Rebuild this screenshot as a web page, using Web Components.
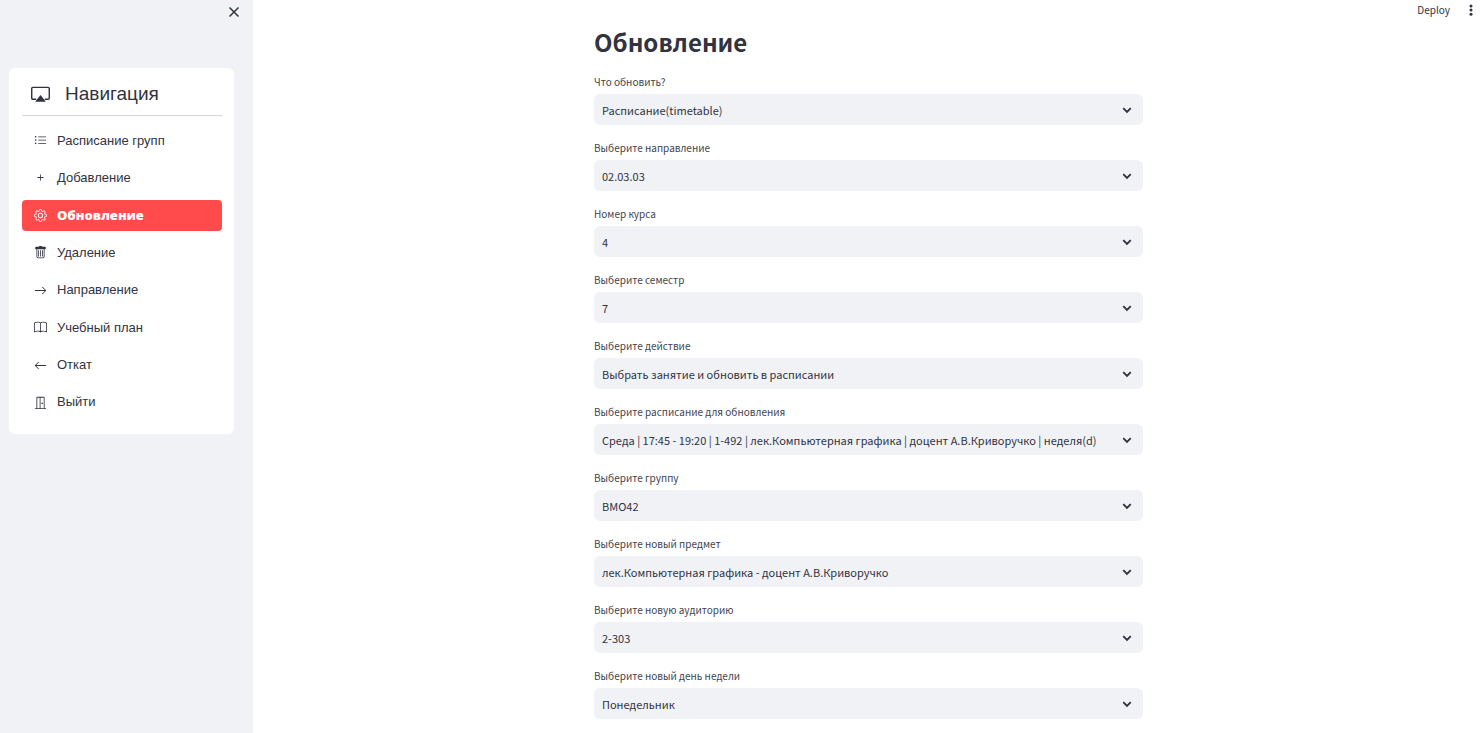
<!DOCTYPE html>
<html lang="ru">
<head>
<meta charset="utf-8">
<title>Обновление</title>
<style>
  html, body { margin: 0; height: 100%; }
  body { font-family: "Noto Sans CJK SC", "Noto Sans", sans-serif; color: #31333f; background: #fff; }
</style>
</head>
<body>
<timetable-app></timetable-app>
<script>
const ICONS = {
  airplay: '<path fill="none" stroke="currentColor" stroke-width="1.2" stroke-linecap="round" d="M4 12H1.600A1 1 0 0 1 .6 11V3A1 1 0 0 1 1.600 2h12.800a1 1 0 0 1 1 1v8a1 1 0 0 1-1 1H12"/><path d="M8 8.500 12.500 14h-9z"/>',
  list: '<path fill-rule="evenodd" d="M5 11.500a.5.5 0 0 1 .5-.5h9a.5.5 0 0 1 0 1h-9a.5.5 0 0 1-.5-.5zm0-4a.5.5 0 0 1 .5-.5h9a.5.5 0 0 1 0 1h-9a.5.5 0 0 1-.5-.5zm0-4a.5.5 0 0 1 .5-.5h9a.5.5 0 0 1 0 1h-9a.5.5 0 0 1-.5-.5zm-3 1a1 1 0 1 0 0-2 1 1 0 0 0 0 2zm0 4a1 1 0 1 0 0-2 1 1 0 0 0 0 2zm0 4a1 1 0 1 0 0-2 1 1 0 0 0 0 2z"/>',
  plus: '<path d="M8 4a.5.5 0 0 1 .5.5v3h3a.5.5 0 0 1 0 1h-3v3a.5.5 0 0 1-1 0v-3h-3a.5.5 0 0 1 0-1h3v-3A.5.5 0 0 1 8 4z"/>',
  gear: '<path d="M8 4.754a3.246 3.246 0 1 0 0 6.492 3.246 3.246 0 0 0 0-6.492zM5.754 8a2.246 2.246 0 1 1 4.492 0 2.246 2.246 0 0 1-4.492 0z"/><path d="M9.796 1.343c-.527-1.790-3.065-1.790-3.592 0l-.094.319a.873.873 0 0 1-1.255.52l-.292-.16c-1.640-.892-3.433.902-2.540 2.541l.159.292a.873.873 0 0 1-.52 1.255l-.319.094c-1.790.527-1.790 3.065 0 3.592l.319.094a.873.873 0 0 1 .52 1.255l-.16.292c-.892 1.640.901 3.434 2.541 2.540l.292-.159a.873.873 0 0 1 1.255.52l.094.319c.527 1.790 3.065 1.790 3.592 0l.094-.319a.873.873 0 0 1 1.255-.52l.292.16c1.640.893 3.434-.902 2.540-2.541l-.159-.292a.873.873 0 0 1 .52-1.255l.319-.094c1.790-.527 1.790-3.065 0-3.592l-.319-.094a.873.873 0 0 1-.52-1.255l.16-.292c.893-1.640-.902-3.433-2.541-2.540l-.292.159a.873.873 0 0 1-1.255-.52l-.094-.319zm-2.633.283c.246-.835 1.428-.835 1.674 0l.094.319a1.873 1.873 0 0 0 2.693 1.115l.291-.16c.764-.415 1.600.42 1.184 1.185l-.159.292a1.873 1.873 0 0 0 1.116 2.692l.318.094c.835.246.835 1.428 0 1.674l-.319.094a1.873 1.873 0 0 0-1.115 2.693l.16.291c.415.764-.42 1.600-1.185 1.184l-.291-.159a1.873 1.873 0 0 0-2.693 1.116l-.094.318c-.246.835-1.428.835-1.674 0l-.094-.319a1.873 1.873 0 0 0-2.692-1.115l-.292.16c-.764.415-1.600-.42-1.184-1.185l.159-.291A1.873 1.873 0 0 0 1.945 8.930l-.319-.094c-.835-.246-.835-1.428 0-1.674l.319-.094A1.873 1.873 0 0 0 3.060 4.377l-.16-.292c-.415-.764.42-1.600 1.185-1.184l.292.159a1.873 1.873 0 0 0 2.692-1.115l.094-.319z"/>',
  trash: '<path d="M2.500 1a1 1 0 0 0-1 1v1a1 1 0 0 0 1 1H3v9a2 2 0 0 0 2 2h6a2 2 0 0 0 2-2V4h.5a1 1 0 0 0 1-1V2a1 1 0 0 0-1-1H10a1 1 0 0 0-1-1H7a1 1 0 0 0-1 1H2.500zM4 4h8v9a1 1 0 0 1-1 1H5a1 1 0 0 1-1-1V4zm1.500 1a.5.5 0 0 1 .5.5v7a.5.5 0 0 1-1 0v-7a.5.5 0 0 1 .5-.5zM8 5a.5.5 0 0 1 .5.5v7a.5.5 0 0 1-1 0v-7A.5.5 0 0 1 8 5zm2.500 0a.5.5 0 0 1 .5.5v7a.5.5 0 0 1-1 0v-7a.5.5 0 0 1 .5-.5z" fill-rule="evenodd"/>',
  right: '<path fill-rule="evenodd" d="M1 8a.5.5 0 0 1 .5-.5h11.793l-3.147-3.146a.5.5 0 0 1 .708-.708l4 4a.5.5 0 0 1 0 .708l-4 4a.5.5 0 0 1-.708-.708L13.293 8.500H1.500A.5.5 0 0 1 1 8z"/>',
  left: '<path fill-rule="evenodd" d="M15 8a.5.5 0 0 0-.5-.5H2.707l3.147-3.146a.5.5 0 1 0-.708-.708l-4 4a.5.5 0 0 0 0 .708l4 4a.5.5 0 0 0 .708-.708L2.707 8.500H14.500A.5.5 0 0 0 15 8z"/>',
  book: '<path d="M1 2.828c.885-.37 2.154-.769 3.388-.893 1.330-.134 2.458.063 3.112.752v9.746c-.935-.53-2.120-.603-3.213-.493-1.180.12-2.370.461-3.287.811V2.828zm7.500-.141c.654-.689 1.782-.886 3.112-.752 1.234.124 2.503.523 3.388.893v9.923c-.918-.35-2.107-.692-3.287-.81-1.094-.111-2.278-.039-3.213.492V2.687zM8 1.783C7.015.936 5.587.81 4.287.94c-1.514.153-3.042.672-3.994 1.105A.5.5 0 0 0 0 2.500v11a.5.5 0 0 0 .707.455c.882-.4 2.303-.881 3.680-1.020 1.409-.142 2.590.087 3.223.877a.5.5 0 0 0 .78 0c.633-.79 1.814-1.019 3.222-.877 1.378.139 2.800.62 3.681 1.020A.5.5 0 0 0 16 13.500v-11a.5.5 0 0 0-.293-.455c-.952-.433-2.480-.952-3.994-1.105C10.413.809 8.985.936 8 1.783z"/>',
  door: '<path d="M3 2a1 1 0 0 1 1-1h8a1 1 0 0 1 1 1v13h1.500a.5.5 0 0 1 0 1h-13a.5.5 0 0 1 0-1H3V2zm1 13h3V2H4v13zm4 0h4V2H8v13z"/><path d="M9 9a1 1 0 1 0 2 0 1 1 0 0 0-2 0z"/>',
  close: '<path fill="none" stroke="currentColor" stroke-width="2" d="M2 2l12 12M14 2L2 14"/>',
  chevron: '<path fill="none" stroke="currentColor" stroke-width="3" d="M2 5l6 6 6-6"/>',
  dots: '<circle cx="8" cy="2.500" r="2"/><circle cx="8" cy="8" r="2"/><circle cx="8" cy="13.500" r="2"/>'
};

function define(name, html, render, observed = []) {
  const template = document.createElement('template');
  template.innerHTML = html;
  customElements.define(name, class extends HTMLElement {
    static observedAttributes = observed;
    constructor() {
      super();
      this.attachShadow({ mode: 'open' }).append(template.content.cloneNode(true));
    }
    connectedCallback() { if (render) render(this, this.shadowRoot); }
    attributeChangedCallback() { render(this, this.shadowRoot); }
  });
}

define('ui-icon', `
  <style>
    :host { display: block; flex: none; width: var(--icon-size, 13px); height: var(--icon-size, 13px); }
    svg { display: block; width: 100%; height: 100%; fill: currentColor; }
  </style>
  <svg viewBox="0 0 16 16" aria-hidden="true"></svg>`,
  (el, root) => { root.querySelector('svg').innerHTML = ICONS[el.getAttribute('name')] || ''; },
  ['name']);

define('nav-item', `
  <style>
    :host { display: block; }
    a { display: flex; align-items: center; gap: 10px; height: 31px; padding: 0 12px; border-radius: 4px;
        color: #31333f; font-size: 13px; line-height: 20px; text-decoration: none; }
    :host([active]) a { background: #ff4b4b; color: #fff; font-family: var(--active-font); font-weight: 800; }
  </style>
  <a href="#"><ui-icon></ui-icon><slot></slot></a>`,
  (el, root) => {
    root.querySelector('ui-icon').setAttribute('name', el.getAttribute('icon'));
    if (el.hasAttribute('active')) root.querySelector('a').setAttribute('aria-current', 'page');
  });

define('nav-card', `
  <style>
    :host { display: block; padding: 12px 12px 16px 13px; border-radius: 6px; background: #fff;
            font-family: "Liberation Sans", Arial, sans-serif; --active-font: "Open Sans", sans-serif; }
    header { display: flex; align-items: center; gap: 15px; height: 28px; padding: 0 9px 7px; border-bottom: 1px solid #d5d6db;
             --icon-size: 19px; }
    h2 { margin: 0; font-size: 19px; line-height: 28px; font-weight: 400; }
    nav { display: flex; flex-direction: column; justify-content: space-between; min-height: 293px; padding-top: 9px; }
  </style>
  <header><ui-icon name="airplay"></ui-icon><h2>Навигация</h2></header>
  <nav><slot></slot></nav>`);

define('app-sidebar', `
  <style>
    :host { display: block; flex: none; box-sizing: border-box; width: 253px; padding: 4px 19px 0 9px; background: #f0f2f6; }
    .top { display: flex; justify-content: flex-end; height: 64px; margin-right: -8px; }
    button { display: grid; place-items: center; width: 16px; height: 16px; padding: 0; border: 0; background: none;
             color: #31333f; --icon-size: 12px; }
  </style>
  <div class="top"><button type="button" aria-label="Закрыть"><ui-icon name="close"></ui-icon></button></div>
  <slot></slot>`);

define('select-field', `
  <style>
    :host { display: block; }
    label { display: block; padding-bottom: 4px; color: #42444f; font-size: 10px; line-height: 16px; }
    .box { display: grid; align-items: center; border-radius: 6px; background: #f0f2f6; }
    select, ui-icon { grid-area: 1 / 1; }
    select { appearance: none; width: 100%; height: 31px; margin: 0; padding: 0 32px 0 8px; border: 0; border-radius: 6px;
             background: transparent; color: inherit; font: 11px/18px "Noto Sans CJK SC", "Noto Sans", sans-serif; }
    ui-icon { justify-self: end; margin-right: 11px; pointer-events: none; --icon-size: 10px; }
  </style>
  <label for="field"></label>
  <div class="box"><select id="field"><option></option></select><ui-icon name="chevron"></ui-icon></div>`,
  (el, root) => {
    root.querySelector('label').textContent = el.getAttribute('label');
    root.querySelector('option').textContent = el.getAttribute('value');
  });

define('app-toolbar', `
  <style>
    :host { display: flex; align-items: center; gap: 15px; position: absolute; top: 0; right: 7px; height: 20px; }
    button { display: grid; place-items: center; padding: 0; border: 0; background: none; color: #31333f;
             font: 10px/16px "Noto Sans CJK SC", "Noto Sans", sans-serif; --icon-size: 12px; }
  </style>
  <button type="button">Deploy</button>
  <button type="button" aria-label="Меню"><ui-icon name="dots"></ui-icon></button>`);

define('timetable-app', `
  <style>
    :host { display: flex; height: 100vh; overflow: hidden; }
    main { position: relative; flex: 1; min-width: 0; overflow: hidden; }
    .content { box-sizing: border-box; max-width: 581px; margin: 0 auto; padding: 22px 16px; }
    h1 { margin: 0 0 12px; font-size: 24px; line-height: 40px; font-weight: 700; }
    form { display: grid; gap: 15px; }
  </style>
  <app-sidebar>
    <nav-card>
      <nav-item icon="list">Расписание групп</nav-item>
      <nav-item icon="plus">Добавление</nav-item>
      <nav-item icon="gear" active>Обновление</nav-item>
      <nav-item icon="trash">Удаление</nav-item>
      <nav-item icon="right">Направление</nav-item>
      <nav-item icon="book">Учебный план</nav-item>
      <nav-item icon="left">Откат</nav-item>
      <nav-item icon="door">Выйти</nav-item>
    </nav-card>
  </app-sidebar>
  <main>
    <app-toolbar></app-toolbar>
    <div class="content">
      <h1>Обновление</h1>
      <form>
        <select-field label="Что обновить?" value="Расписание(timetable)"></select-field>
        <select-field label="Выберите направление" value="02.03.03"></select-field>
        <select-field label="Номер курса" value="4"></select-field>
        <select-field label="Выберите семестр" value="7"></select-field>
        <select-field label="Выберите действие" value="Выбрать занятие и обновить в расписании"></select-field>
        <select-field label="Выберите расписание для обновления" value="Среда | 17:45 - 19:20 | 1-492 | лек.Компьютерная графика | доцент А.В.Криворучко | неделя(d)"></select-field>
        <select-field label="Выберите группу" value="ВМО42"></select-field>
        <select-field label="Выберите новый предмет" value="лек.Компьютерная графика - доцент А.В.Криворучко"></select-field>
        <select-field label="Выберите новую аудиторию" value="2-303"></select-field>
        <select-field label="Выберите новый день недели" value="Понедельник"></select-field>
      </form>
    </div>
  </main>`);
</script>
</body>
</html>
